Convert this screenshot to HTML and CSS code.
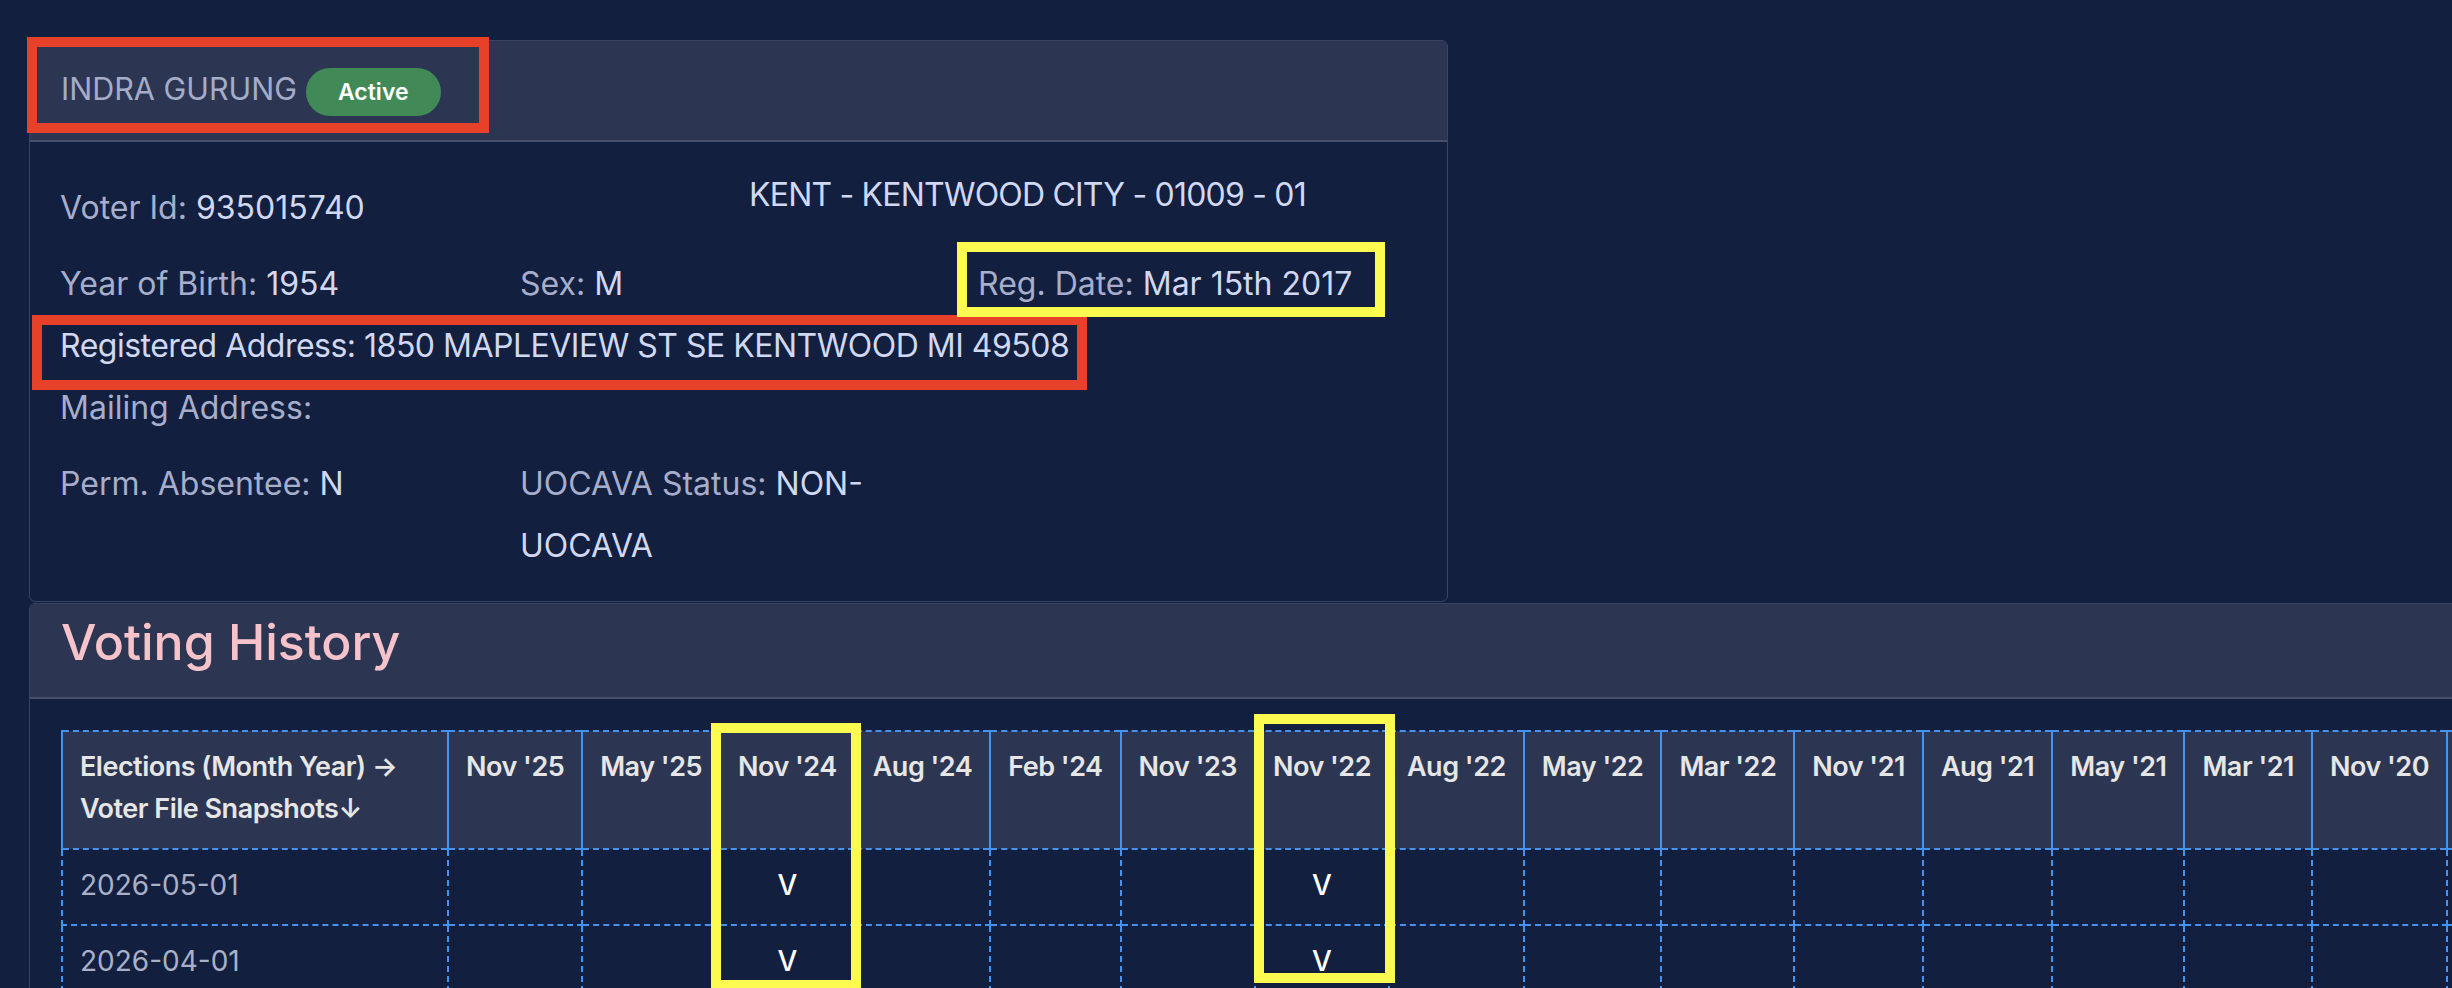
FILE: index.html
```html
<!DOCTYPE html>
<html lang="en">
<head>
<meta charset="utf-8">
<title>Voter Record</title>
<link rel="stylesheet" href="styles.css">
</head>
<body>
<main class="page">
  <section class="card card-voter">
    <header class="card-head voter-head">
      <span class="voter-name">INDRA GURUNG</span>
      <span class="badge">Active</span>
    </header>
    <div class="voter-body">
      <div class="row row-2 gap-after">
        <div class="field drop"><span class="lbl">Voter Id:</span> <span class="val">935015740</span></div>
        <div class="field val caps-tight">KENT - KENTWOOD CITY - 01009 - 01</div>
      </div>
      <div class="row row-3">
        <div class="field"><span class="lbl">Year of Birth:</span> <span class="val">1954</span></div>
        <div class="field"><span class="lbl">Sex:</span> <span class="val">M</span></div>
        <div class="field"><span class="lbl">Reg. Date:</span> <span class="val">Mar 15th 2017</span></div>
      </div>
      <div class="row">
        <div class="field val caps">Registered Address: 1850 MAPLEVIEW ST SE KENTWOOD MI 49508</div>
      </div>
      <div class="row gap-after">
        <div class="field lbl">Mailing Address:</div>
      </div>
      <div class="row row-3">
        <div class="field"><span class="lbl">Perm. Absentee:</span> <span class="val">N</span></div>
        <div class="field narrow"><span class="lbl">UOCAVA Status:</span> <span class="val">NON-UOCAVA</span></div>
      </div>
    </div>
  </section>

  <section class="card card-history">
    <header class="card-head history-head">
      <h2 class="history-title">Voting History</h2>
    </header>
    <div class="history-body">
      <table class="history">
        <thead>
          <tr>
            <th class="corner">Elections (Month Year) →<br>Voter File Snapshots↓</th>
            <th>Nov '25</th><th>May '25</th><th>Nov '24</th><th>Aug '24</th><th>Feb '24</th><th>Nov '23</th><th>Nov '22</th><th>Aug '22</th><th>May '22</th><th>Mar '22</th><th>Nov '21</th><th>Aug '21</th><th>May '21</th><th>Mar '21</th><th>Nov '20</th><th>Aug '20</th><th>Mar '20</th><th>Nov '19</th><th>May '19</th><th>Nov '18</th><th>Aug '18</th>
          </tr>
        </thead>
        <tbody>
          <tr>
            <td class="snap">2026-05-01</td>
            <td></td><td></td><td class="mark">V</td><td></td><td></td><td></td><td class="mark">V</td><td></td><td></td><td></td><td></td><td></td><td></td><td></td><td></td><td></td><td></td><td></td><td></td><td></td><td></td>
          </tr>
          <tr>
            <td class="snap">2026-04-01</td>
            <td></td><td></td><td class="mark">V</td><td></td><td></td><td></td><td class="mark">V</td><td></td><td></td><td></td><td></td><td></td><td></td><td></td><td></td><td></td><td></td><td></td><td></td><td></td><td></td>
          </tr>
          <tr>
            <td class="snap">2026-03-01</td>
            <td></td><td></td><td class="mark">V</td><td></td><td></td><td></td><td class="mark">V</td><td></td><td></td><td></td><td></td><td></td><td></td><td></td><td></td><td></td><td></td><td></td><td></td><td></td><td></td>
          </tr>
        </tbody>
      </table>
    </div>
  </section>
</main>

<div class="mark-box mark-red mk-name"></div>
<div class="mark-box mark-red mk-address"></div>
<div class="mark-box mark-yellow mk-regdate"></div>
<div class="mark-box mark-yellow mk-nov24"></div>
<div class="mark-box mark-yellow mk-nov22"></div>
</body>
</html>
```
FILE: styles.css
```css
html {
  overflow: hidden;
  background: #131f3f;
}

body {
  margin: 0;
  position: relative;
  min-height: 988px;
  background: #131f3f;
  color: #d0d8f2;
  font-family: Inter, "Noto Sans", "DejaVu Sans", sans-serif;
}

.page {
  display: flex;
  flex-direction: column;
  align-items: flex-start;
  gap: 1px;
  padding: 40px 0 0 29px;
}

.card {
  border: 1px solid #3a4360;
  border-radius: 6px;
  background: #131f3f;
  box-sizing: border-box;
}

.card-head {
  background: #2c3652;
  border-bottom: 2px solid #474f6b;
  border-radius: 5px 5px 0 0;
}

/* ---------- voter card ---------- */
.card-voter {
  width: 1419px;
}

.voter-head {
  display: flex;
  align-items: baseline;
  gap: 9px;
  padding: 27px 31px 24px;
}

.voter-name {
  font-size: 30.5px;
  color: #a4acc7;
}

.badge {
  background: #418a58;
  color: #ffffff;
  font-size: 23px;
  font-weight: 600;
  line-height: 48px;
  padding: 0 32px;
  border-radius: 24px;
}

.voter-body {
  padding: 22px 30px 24px;
  font-size: 32px;
  line-height: 62px;
}

.row {
  display: grid;
  grid-template-columns: 1fr;
}

.row-2 {
  grid-template-columns: 689px 1fr;
  align-items: start;
}

.row-3 {
  grid-template-columns: 460px 458px 1fr;
  align-items: start;
}

.gap-after {
  margin-bottom: 14px;
}

.field.drop {
  padding-top: 13px;
}

.field.narrow {
  padding-right: 24px;
}

.caps {
  letter-spacing: -0.5px;
}

.caps-tight {
  letter-spacing: -0.8px;
}

.lbl {
  color: #a6aecb;
}

.val {
  color: #d0d8f2;
}

/* ---------- history card ---------- */
.card-history {
  width: max-content;
}

.history-head {
  padding: 8px 31px 25px;
}

.history-title {
  margin: 0;
  font-size: 50px;
  line-height: 60px;
  font-weight: 500;
  color: #f6c3cb;
}

.history-body {
  padding: 31px 31px 0;
}

.history {
  border-collapse: collapse;
  font-size: 27px;
  line-height: 42px;
}

.history th {
  background: #2c3652;
  color: #e6e6e6;
  font-weight: 600;
  letter-spacing: -0.5px;
  text-align: left;
  vertical-align: top;
  white-space: nowrap;
  padding: 14px 17px 18px;
  border: 2px dashed #4493f0;
  border-left-style: solid;
  border-right-style: solid;
}

.history th.corner {
  width: 350px;
}

.history td {
  border: 2px dashed #4493f0;
  padding: 14px 17px 18px;
  color: #a9b1c9;
  white-space: nowrap;
}

.history td.snap {
  font-size: 28px;
}

.history td.mark {
  text-align: center;
  color: #ffffff;
  font-size: 28px;
  font-weight: 500;
}

/* ---------- annotation overlays ---------- */
.mark-box {
  position: absolute;
  box-sizing: border-box;
  border: 10px solid;
  pointer-events: none;
}

.mark-red {
  border-color: #e8412a;
}

.mark-yellow {
  border-color: #fdfb50;
}

.mk-name {
  left: 27px;
  top: 37px;
  width: 462px;
  height: 96px;
}

.mk-address {
  left: 32px;
  top: 315px;
  width: 1055px;
  height: 75px;
}

.mk-regdate {
  left: 957px;
  top: 242px;
  width: 428px;
  height: 75px;
}

.mk-nov24 {
  left: 711px;
  top: 723px;
  width: 150px;
  height: 267px;
}

.mk-nov22 {
  left: 1254px;
  top: 714px;
  width: 141px;
  height: 269px;
}
```
